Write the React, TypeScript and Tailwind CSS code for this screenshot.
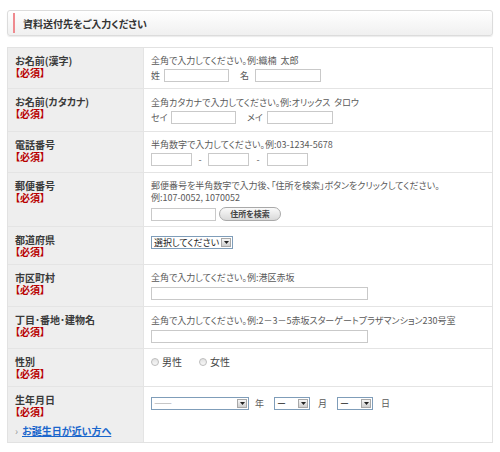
import type { ReactNode } from 'react';

function Req() {
  return <div className="font-bold text-[#b80000]">【必須】</div>;
}

function Field({ w }: { w: string }) {
  return <div className={`h-[13px] border border-[#c9c9c9] bg-white ${w}`} />;
}

function Sel({ w, text }: { w: string; text: string }) {
  return (
    <div className={`flex h-[13px] items-center border border-[#7f9db9] bg-white ${w}`}>
      <span className="flex-1 whitespace-nowrap pl-[2px] text-[9px] leading-[11px] text-[#222]">{text}</span>
      <span className="mr-[1px] flex h-[9px] w-[10px] shrink-0 items-center justify-center border border-[#a8a8a8] bg-gradient-to-b from-[#f6f6f6] to-[#cfcfcf]">
        <svg width="5" height="3" viewBox="0 0 5 3">
          <path d="M0 0h5L2.5 3z" fill="#222" />
        </svg>
      </span>
    </div>
  );
}

function Radio({ label }: { label: string }) {
  return (
    <div className="flex items-center gap-[3px]">
      <span className="h-[8px] w-[8px] rounded-full border border-[#bdbdbd] bg-gradient-to-b from-[#e2e2e2] to-[#f7f7f7]" />
      <span className="text-[10px] text-[#444]">{label}</span>
    </div>
  );
}

function Row({ h, label, children, extra }: { h: string; label: string; children: ReactNode; extra?: ReactNode }) {
  return (
    <div className={`flex border-b border-[#e4e4e4] last:border-b-0 ${h}`}>
      <div className="w-[136px] shrink-0 border-r border-[#e4e4e4] bg-[#eeeeee] pl-[7px] pt-[7px] text-[10px] leading-[12px]">
        <div className="font-bold text-[#3a3a3a]">{label}</div>
        <Req />
        {extra}
      </div>
      <div className="flex-1 bg-white pl-[7px] pt-[7px] text-[9px] leading-[12px] text-[#5a5a5a]">{children}</div>
    </div>
  );
}

export default function App() {
  return (
    <div className="h-[452px] w-[500px] overflow-hidden bg-white font-['Noto_Sans_CJK_JP','Noto_Sans',sans-serif] [font-feature-settings:'palt']">
      {/* heading bar */}
      <div className="ml-[7px] mt-[10px] flex h-[26px] w-[486px] items-center rounded-[3px] border border-[#dcdcdc] bg-gradient-to-b from-white to-[#f0f0f0] shadow-[0_1px_1px_rgba(0,0,0,0.08)]">
        <div className="ml-[5px] h-[20px] w-[2px] bg-[#ef8a8f]" />
        <div className="ml-[8px] text-[10px] font-bold text-[#333]">資料送付先をご入力ください</div>
      </div>

      <div className="ml-[7px] mt-[11px] w-[486px] border border-[#e2e2e2]">
        <Row h="h-[41px]" label="お名前(漢字)">
          <div>全角で入力してください。例:織楠&nbsp;&nbsp;太郎</div>
          <div className="mt-[2px] flex items-center">
            <span className="w-[13px]">姓</span>
            <Field w="w-[65px]" />
            <span className="ml-[11px] w-[15px]">名</span>
            <Field w="w-[66px]" />
          </div>
        </Row>
        <Row h="h-[43px]" label="お名前(カタカナ)">
          <div className="pt-[1px]">全角カタカナで入力してください。例:オリックス&nbsp;&nbsp;タロウ</div>
          <div className="mt-[2px] flex items-center">
            <span className="w-[20px]">セイ</span>
            <Field w="w-[65px]" />
            <span className="ml-[11px] w-[20px]">メイ</span>
            <Field w="w-[66px]" />
          </div>
        </Row>
        <Row h="h-[41px]" label="電話番号">
          <div>半角数字で入力してください。例:03-1234-5678</div>
          <div className="mt-[2px] flex items-center">
            <Field w="w-[41px]" />
            <span className="w-[16px] text-center">-</span>
            <Field w="w-[41px]" />
            <span className="w-[18px] text-center">-</span>
            <Field w="w-[41px]" />
          </div>
        </Row>
        <Row h="h-[54px]" label="郵便番号">
          <div>郵便番号を半角数字で入力後、「住所を検索」ボタンをクリックしてください。</div>
          <div>例:107-0052, 1070052</div>
          <div className="mt-[3px] flex items-center">
            <Field w="w-[65px]" />
            <button className="ml-[3px] flex h-[14px] w-[62px] items-center justify-center rounded-full border border-[#a9a9a9] bg-gradient-to-b from-[#fafafa] to-[#d9d9d9] text-[8px] font-bold leading-none text-[#444]">
              住所を検索
            </button>
          </div>
        </Row>
        <Row h="h-[38px]" label="都道府県">
          <div className="pt-[2px]">
            <Sel w="w-[82px]" text="選択してください" />
          </div>
        </Row>
        <Row h="h-[42px]" label="市区町村">
          <div>全角で入力してください。例:港区赤坂</div>
          <div className="mt-[3px]">
            <Field w="w-[217px]" />
          </div>
        </Row>
        <Row h="h-[42px]" label="丁目･番地･建物名">
          <div className="pt-[1px]">全角で入力してください。例:2－3－5赤坂スターゲートプラザマンション230号室</div>
          <div className="mt-[3px]">
            <Field w="w-[217px]" />
          </div>
        </Row>
        <Row h="h-[38px]" label="性別">
          <div className="flex items-center gap-[17px]">
            <Radio label="男性" />
            <Radio label="女性" />
          </div>
        </Row>
        <Row
          h="h-[55px]"
          label="生年月日"
          extra={
            <div className="mt-[7px] flex items-center text-[10px]">
              <span className="w-[7px] text-[#999]">›</span>
              <span className="font-bold text-[#1a66cc] underline">お誕生日が近い方へ</span>
            </div>
          }
        >
          <div className="flex items-center pt-[3px]">
            <Sel w="w-[98px]" text="――" />
            <span className="ml-[6px] w-[19px]">年</span>
            <Sel w="w-[36px]" text="ー" />
            <span className="ml-[8px] w-[19px]">月</span>
            <Sel w="w-[36px]" text="ー" />
            <span className="ml-[8px]">日</span>
          </div>
        </Row>
      </div>
    </div>
  );
}
